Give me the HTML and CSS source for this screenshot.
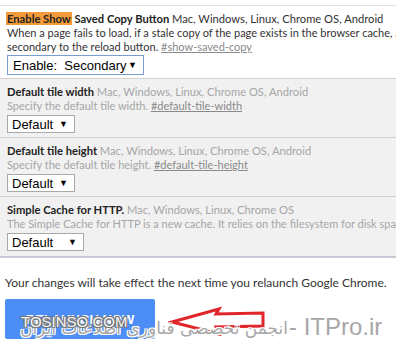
FILE: index.html
```html
<!DOCTYPE html>
<html lang="en">
<head>
    <meta charset="UTF-8">
    <title>Flags</title>
    <link rel="stylesheet" href="styles.css">
</head>
<body>
    <div id="flags">
        <div class="flag current">
            <div class="flag-title"><span class="hl">Enable Show</span> Saved Copy Button <span class="platforms">Mac, Windows, Linux, Chrome OS, Android</span></div>
            <div class="flag-desc">When a page fails to load, if a stale copy of the page exists in the browser cache, a button will be presented to allow the user to load that stale copy.</div>
            <div class="flag-desc">secondary to the reload button. <a href="#">#show-saved-copy</a></div>
            <span class="sel sel-wide">Enable:&nbsp; Secondary<span class="caret">▼</span></span>
        </div>

        <div class="flag">
            <div class="flag-title">Default tile width <span class="platforms">Mac, Windows, Linux, Chrome OS, Android</span></div>
            <div class="flag-desc">Specify the default tile width. <a href="#">#default-tile-width</a></div>
            <span class="sel">Default<span class="caret">▼</span></span>
        </div>

        <div class="flag">
            <div class="flag-title">Default tile height <span class="platforms">Mac, Windows, Linux, Chrome OS, Android</span></div>
            <div class="flag-desc">Specify the default tile height. <a href="#">#default-tile-height</a></div>
            <span class="sel">Default<span class="caret">▼</span></span>
        </div>

        <div class="flag last">
            <div class="flag-title">Simple Cache for HTTP. <span class="platforms">Mac, Windows, Linux, Chrome OS</span></div>
            <div class="flag-desc">The Simple Cache for HTTP is a new cache. It relies on the filesystem for disk space allocation.</div>
            <span class="sel sel-mid">Default<span class="caret">▼</span></span>
        </div>
    </div>

    <div id="relaunch">
        <p>Your changes will take effect the next time you relaunch Google Chrome.</p>
        <button>RELAUNCH NOW</button>
    </div>

    <!-- red arrow drawn over the screenshot -->
    <svg class="arrow" width="100" height="36" viewBox="0 0 100 36">
        <path d="M4 18 L51 5 L48 10 L95 9 L95 22 L48 23 L51 30 Z" fill="none" stroke="#e0262b" stroke-width="3" stroke-linejoin="miter"/>
    </svg>

    <!-- watermark -->
    <span class="wm-fa" dir="rtl">انجمن تخصصی فناوری اطلاعات ایران</span>
    <span class="wm-site">TOSINSO.COM</span>
    <span class="wm-it">- ITPro.ir</span>
</body>
</html>
```

FILE: styles.css
```css
body {
    margin: 0;
    font-family: 'Lato', 'Open Sans', Arial, sans-serif;
    font-size: 11px;
    color: #333;
    background-color: #fff;
    width: 396px;
    height: 348px;
    overflow: hidden;
    position: relative;
}

#flags {
    margin-top: 5px;
    border-top: 1px solid #e0e0e0;
    border-bottom: 2px solid #c9c9d6;
    background-color: #f1f1f1;
}

.flag {
    padding: 5px 7px 4px 7px;
    border-bottom: 1px solid #d2d2d2;
    white-space: nowrap;
    overflow: hidden;
    color: #a6a6a6;
}

.flag.last {
    border-bottom: none;
    padding-bottom: 5px;
}

.flag.current {
    background-color: #fff;
    color: #333;
    padding-bottom: 3px;
}

.flag-title {
    font-weight: bold;
    font-size: 11.2px;
    color: #222;
    line-height: 15px;
}

.hl {
    background-color: #f39a3a;
    margin-left: -1px;
    padding: 0 1px;
}

.platforms {
    font-weight: normal;
    color: #a6a6a6;
}

.current .platforms {
    color: #333;
}

.flag-desc {
    line-height: 14px;
}

.flag-desc a {
    color: #8a8a8a;
    text-decoration: underline;
}

.sel {
    display: flex;
    align-items: center;
    justify-content: space-between;
    box-sizing: border-box;
    margin-top: 2px;
    font-family: Arial, 'Liberation Sans', sans-serif;
    font-size: 13px;
    color: #000;
    background-color: #fff;
    border: 1px solid #a9a9a9;
    height: 18px;
    width: 68px;
    padding: 0 6px 0 4px;
}

.sel-wide {
    width: 137px;
    height: 20px;
    margin-top: 1px;
    border-color: #7a9cd3;
    padding-left: 5px;
}

.sel-mid {
    width: 77px;
}

.caret {
    font-size: 9px;
}

#relaunch {
    padding: 17px 5px 0 5px;
    white-space: nowrap;
}

#relaunch p {
    margin: 0 0 9px 0;
    font-size: 12px;
    color: #333;
}

#relaunch button {
    display: block;
    background-color: #4c8ef5;
    color: #fff;
    border: none;
    border-radius: 2px;
    width: 150px;
    height: 40px;
    font-family: 'Liberation Sans', Arial, sans-serif;
    font-weight: bold;
    font-size: 13px;
}

.arrow {
    position: absolute;
    left: 168px;
    top: 304px;
}

.wm-site,
.wm-fa,
.wm-it {
    position: absolute;
    white-space: nowrap;
    color: #a7a7a7;
    text-shadow: 1px 1px 0 #fff, -1px -1px 0 #fff, 1px -1px 0 #fff, -1px 1px 0 #fff;
}

.wm-site {
    left: 21px;
    top: 313px;
    font-family: 'Liberation Sans', Arial, sans-serif;
    font-size: 15px;
    color: #f4f4f4;
    text-shadow: 1px 1px 0 #777, -1px -1px 0 #777, 1px -1px 0 #777, -1px 1px 0 #777;
}

.wm-fa {
    right: 108px;
    top: 318px;
    font-family: 'DejaVu Sans', sans-serif;
    font-size: 17px;
}

.wm-it {
    left: 289px;
    top: 313px;
    font-family: 'Liberation Sans', Arial, sans-serif;
    font-size: 24px;
}
```
